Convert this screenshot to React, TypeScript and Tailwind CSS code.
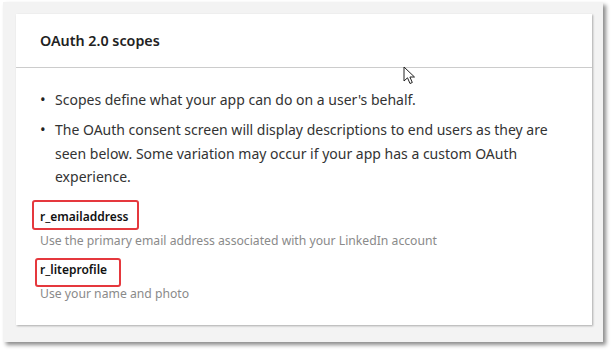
import React from "react";

const font = { fontFamily: '"Noto Sans", "Open Sans", Arial, sans-serif' };

function Cursor() {
  return (
    <svg
      className="absolute left-[403px] top-[66px]"
      width="14"
      height="20"
      viewBox="0 0 14 20"
    >
      <path
        d="M1 1 L1 15 L4.5 11.8 L7 17.5 L9.3 16.5 L6.9 11 L11.5 11 Z"
        fill="#fff"
        stroke="#222"
        strokeWidth="1"
        strokeLinejoin="round"
      />
    </svg>
  );
}

export default function App() {
  return (
    <div className="w-[616px] h-[354px] bg-white pl-[3px] pt-[2px]" style={font}>
      <div className="w-[600px] h-[340px] bg-[#f3f3f3] shadow-[3px_3px_4px_rgba(0,0,0,0.45)] pl-[13px] pt-[12px] relative">
        <div className="w-[576px] h-[311px] bg-white shadow-[1px_1px_2px_rgba(0,0,0,0.3)] flex flex-col">
          <div className="h-[54px] flex items-center pl-[24px] border-b border-[#cccccc]">
            <span className="text-[14.3px] font-semibold text-[#222]">OAuth 2.0 scopes</span>
          </div>
          <div className="pl-[24px] pt-[20px] text-[#333]">
            <ul className="flex flex-col gap-[6.5px] text-[14px] leading-[23.5px]">
              <li className="flex">
                <span className="w-[15px] shrink-0 text-[15px] text-[#222]">•</span>
                <span>Scopes define what your app can do on a user's behalf.</span>
              </li>
              <li className="flex">
                <span className="w-[15px] shrink-0 text-[15px] text-[#222]">•</span>
                <span>
                  The OAuth consent screen will display descriptions to end users as they are
                  <br />
                  seen below. Some variation may occur if your app has a custom OAuth
                  <br />
                  experience.
                </span>
              </li>
            </ul>
            <div className="mt-[18px] flex flex-col">
              <div className="relative self-start text-[12px] leading-[20px] font-semibold text-[#111]">
                r_emailaddress
                <span className="absolute left-[-8px] top-[-7px] right-[-10px] bottom-[-3px] border-[2.5px] border-[#e5383d] rounded-[3px]" />
              </div>
              <div className="mt-[4px] text-[12.2px] leading-[20px] text-[#8a8a8a]">
                Use the primary email address associated with your LinkedIn account
              </div>
              <div className="mt-[9px] relative self-start text-[12px] leading-[20px] font-semibold text-[#111]">
                r_liteprofile
                <span className="absolute left-[-5px] top-[-2px] right-[-14px] bottom-[-7px] border-[2.5px] border-[#e5383d] rounded-[3px]" />
              </div>
              <div className="mt-[4px] text-[12.2px] leading-[20px] text-[#8a8a8a]">
                Use your name and photo
              </div>
            </div>
          </div>
        </div>
      </div>
      <div className="absolute left-0 top-0">
        <Cursor />
      </div>
    </div>
  );
}
